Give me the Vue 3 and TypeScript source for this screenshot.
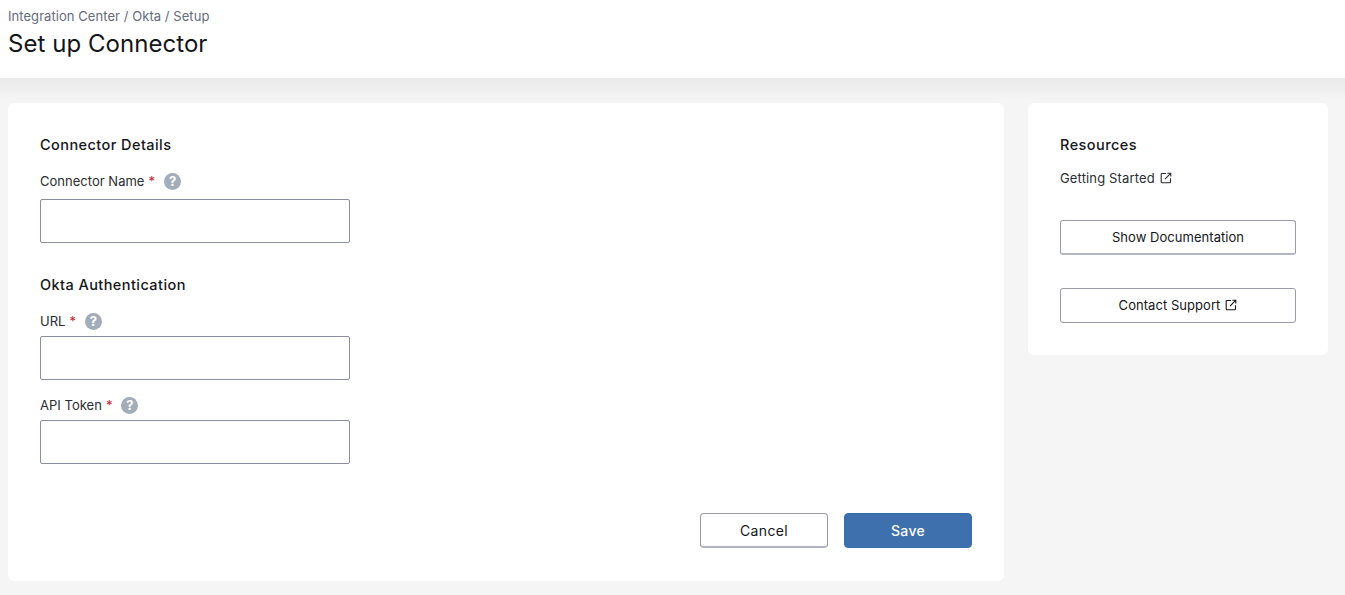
<template>
  <div class="page">
    <header class="page-header">
      <div class="breadcrumb">Integration Center / Okta / Setup</div>
      <h1 class="page-title">Set up Connector</h1>
    </header>

    <main class="content">
      <section class="card form-card">
        <h2 class="section-title">Connector Details</h2>
        <div class="field first-field">
          <label class="field-label">
            <span>Connector Name</span>
            <span class="required">*</span>
            <span class="help">?</span>
          </label>
          <input class="text-input" type="text" />
        </div>

        <h2 class="section-title okta-title">Okta Authentication</h2>
        <div class="field url-field">
          <label class="field-label tight">
            <span>URL</span>
            <span class="required">*</span>
            <span class="help">?</span>
          </label>
          <input class="text-input" type="text" />
        </div>
        <div class="field token-field">
          <label class="field-label tight">
            <span>API Token</span>
            <span class="required">*</span>
            <span class="help">?</span>
          </label>
          <input class="text-input" type="text" />
        </div>

        <div class="form-actions">
          <button class="action-btn cancel-btn" type="button">Cancel</button>
          <button class="action-btn save-btn" type="button">Save</button>
        </div>
      </section>

      <aside class="card resources-card">
        <h2 class="section-title">Resources</h2>
        <a class="resource-link">
          <span>Getting Started</span>
          <svg class="external" viewBox="0 0 12 12" fill="none" stroke="currentColor" stroke-width="1.1">
            <path d="M6 1.5H2a.8.8 0 0 0-.8.8v7.7c0 .4.4.8.8.8h7.7c.4 0 .8-.4.8-.8V6.2" />
            <path d="M5 7.2 10.6 1.4M7.4 1.2h3.4v3.4" />
          </svg>
        </a>
        <button class="side-btn doc-btn" type="button">Show Documentation</button>
        <button class="side-btn support-btn" type="button">
          <span>Contact Support</span>
          <svg class="external" viewBox="0 0 12 12" fill="none" stroke="currentColor" stroke-width="1.1">
            <path d="M6 1.5H2a.8.8 0 0 0-.8.8v7.7c0 .4.4.8.8.8h7.7c.4 0 .8-.4.8-.8V6.2" />
            <path d="M5 7.2 10.6 1.4M7.4 1.2h3.4v3.4" />
          </svg>
        </button>
      </aside>
    </main>
  </div>
</template>

<script setup lang="ts">
</script>

<style>
html,
body {
  background: #f5f5f5;
}
</style>

<style scoped>
.page {
  height: 595px;
  overflow: hidden;
  background: linear-gradient(#e9e9e9 0, #f5f5f5 22px) no-repeat 0 78px;
  font-family: Inter, "Liberation Sans", sans-serif;
  color: #16181d;
}

.page-header {
  height: 78px;
  box-sizing: border-box;
  padding: 8px 8px 0;
  background: #fff;
}

.breadcrumb {
  font-size: 13px;
  line-height: 16px;
  letter-spacing: 0.06px;
  color: #646b7d;
}

.page-title {
  margin: 4px 0 0;
  font-size: 24px;
  line-height: 32px;
  font-weight: 400;
  letter-spacing: 0.05px;
  color: #14161a;
}

.content {
  display: flex;
  align-items: flex-start;
  gap: 24px;
  padding: 25px 8px 0;
}

.card {
  box-sizing: border-box;
  background: #fff;
  border-radius: 6px;
  padding: 32px;
}

.form-card {
  width: 996px;
  height: 478px;
}

.resources-card {
  width: 300px;
  height: 252px;
}

.section-title {
  margin: 0;
  font-size: 14.5px;
  line-height: 20px;
  font-weight: 500;
  letter-spacing: 0.43px;
  color: #14161a;
}

.okta-title {
  margin-top: 32px;
}

.field {
  display: flex;
  flex-direction: column;
}

.first-field {
  margin-top: 16px;
}

.url-field {
  margin-top: 16px;
}

.token-field {
  margin-top: 15px;
}

.field-label {
  display: flex;
  align-items: center;
  height: 20px;
  margin-bottom: 8px;
  font-size: 13px;
  letter-spacing: 0.02px;
  color: #2a2d34;
}

.field-label.tight {
  margin-bottom: 5px;
}

.required {
  margin-left: 4px;
  color: #c8202f;
}

.help {
  display: flex;
  align-items: center;
  justify-content: center;
  width: 17px;
  height: 17px;
  margin-left: 9px;
  border-radius: 50%;
  background: #a3adba;
  color: #fff;
  font-size: 13px;
  font-weight: 700;
}

.text-input {
  display: block;
  box-sizing: border-box;
  width: 310px;
  height: 44px;
  border: 1px solid #8b8e9e;
  border-radius: 2px;
  background: #fff;
  outline: none;
}

.form-actions {
  display: flex;
  justify-content: flex-end;
  gap: 16px;
  margin-top: 49px;
}

.action-btn {
  width: 128px;
  height: 35px;
  border-radius: 4px;
  font-family: inherit;
  font-size: 14px;
  letter-spacing: 0.35px;
}

.cancel-btn {
  border: 1px solid #9a9cab;
  border-bottom: 2px solid #b0b2bc;
  background: #fff;
  color: #14161a;
}

.save-btn {
  border: 1px solid #3a6dab;
  background: #3e70ad;
  color: #fff;
  font-weight: 500;
}

.resource-link {
  display: flex;
  align-items: center;
  gap: 5px;
  margin-top: 15px;
  height: 16px;
  font-size: 13px;
  letter-spacing: 0.15px;
  color: #2a2d34;
}

.external {
  width: 12px;
  height: 12px;
  flex-shrink: 0;
}

.side-btn {
  display: flex;
  align-items: center;
  justify-content: center;
  gap: 5px;
  box-sizing: border-box;
  width: 236px;
  height: 35px;
  border: 1px solid #9a9cab;
  border-radius: 3px;
  background: #fff;
  font-family: inherit;
  font-size: 13px;
  letter-spacing: 0.05px;
  color: #14161a;
}

.doc-btn {
  margin-top: 34px;
  padding-bottom: 1px;
  border-bottom: 2px solid #b4b6c0;
}

.support-btn {
  margin-top: 33px;
  padding-bottom: 2px;
}
</style>
